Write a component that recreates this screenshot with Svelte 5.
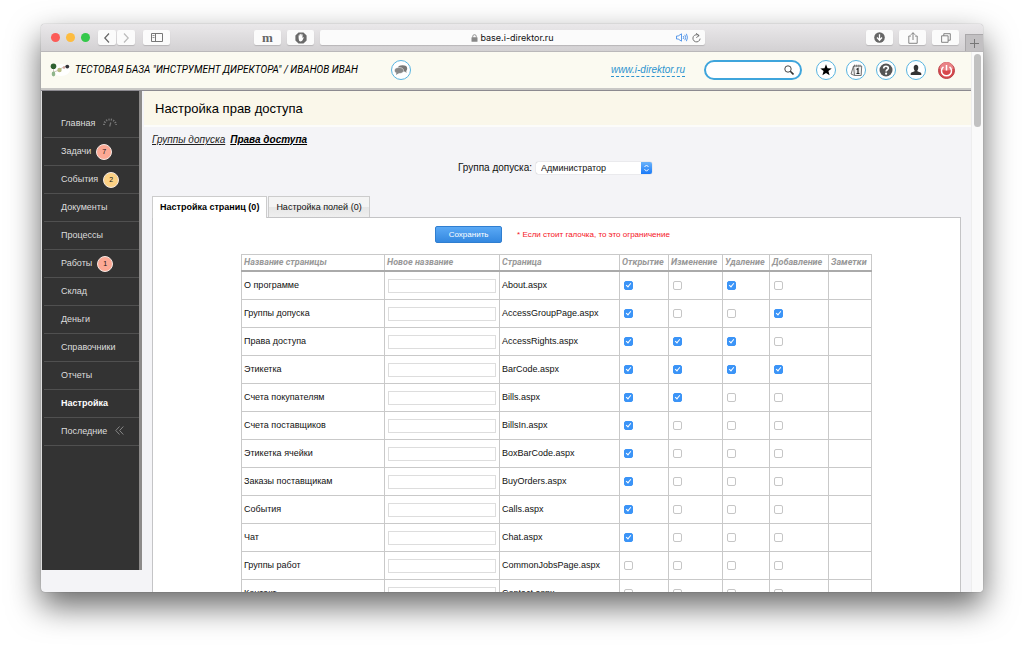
<script>
  const menu = [
    { title: 'Главная', icon: 'gauge' },
    { title: 'Задачи', count: 7, tone: 'red' },
    { title: 'События', count: 2, tone: 'yellow' },
    { title: 'Документы' },
    { title: 'Процессы' },
    { title: 'Работы', count: 1, tone: 'red' },
    { title: 'Склад' },
    { title: 'Деньги' },
    { title: 'Справочники' },
    { title: 'Отчеты' },
    { title: 'Настройка', active: true },
    { title: 'Последние', icon: 'chevrons' }
  ];

  const rights = ['Открытие', 'Изменение', 'Удаление', 'Добавление'];

  // flags: open, edit, delete, add
  let rows = $state([
    { name: 'О программе', page: 'About.aspx', flags: [true, false, true, false] },
    { name: 'Группы допуска', page: 'AccessGroupPage.aspx', flags: [true, false, false, true] },
    { name: 'Права доступа', page: 'AccessRights.aspx', flags: [true, true, true, false] },
    { name: 'Этикетка', page: 'BarCode.aspx', flags: [true, true, true, true] },
    { name: 'Счета покупателям', page: 'Bills.aspx', flags: [true, true, false, false] },
    { name: 'Счета поставщиков', page: 'BillsIn.aspx', flags: [true, false, false, false] },
    { name: 'Этикетка ячейки', page: 'BoxBarCode.aspx', flags: [true, false, false, false] },
    { name: 'Заказы поставщикам', page: 'BuyOrders.aspx', flags: [true, false, false, false] },
    { name: 'События', page: 'Calls.aspx', flags: [true, false, false, false] },
    { name: 'Чат', page: 'Chat.aspx', flags: [true, false, false, false] },
    { name: 'Группы работ', page: 'CommonJobsPage.aspx', flags: [false, false, false, false] },
    { name: 'Контакт', page: 'Contact.aspx', flags: [false, false, false, false] }
  ]);

  let tab = $state(0);
</script>

<div class="desktop">
  <div class="window">
    <div class="toolbar">
      <div class="tools-left">
        <div class="lights"><i class="close"></i><i class="min"></i><i class="max"></i></div>
        <div class="pair">
          <button class="tool narrow" aria-label="Назад">
            <svg width="8" height="12" viewBox="0 0 8 12"><path d="M6 1.5 1.8 6 6 10.5" fill="none" stroke="#666" stroke-width="1.2" /></svg>
          </button>
          <button class="tool narrow" aria-label="Вперед">
            <svg width="8" height="12" viewBox="0 0 8 12"><path d="M2 1.5 6.2 6 2 10.5" fill="none" stroke="#bbb" stroke-width="1.2" /></svg>
          </button>
        </div>
        <button class="tool" aria-label="Боковая панель">
          <svg width="12" height="9" viewBox="0 0 12 9" fill="none" stroke="#777"><path d="M.5.5h11v8H.5zM4.5.5v8" /><path d="M1.5 2.5h2M1.5 4.5h2" stroke-width=".8" /></svg>
        </button>
      </div>
      <div class="tools-center">
        <button class="tool serif">m</button>
        <button class="tool" aria-label="Блокировка">
          <svg width="12" height="12" viewBox="0 0 12 12"><path d="M3.5.4h5l3.1 3.1v5l-3.1 3.1h-5L.4 8.5v-5z" fill="#6a6a6a" /><path d="M3.6 6V3.5c0-.5.7-.5.8 0l.1 1 .1-2c0-.6.8-.6.8 0v1.5l.2-2c.1-.5.8-.5.8 0v2l.4-1.4c.2-.5.9-.3.8.2L7.4 6l.7-.7c.4-.3.9 0 .6.5L7.4 8.6C6.9 9.6 4.6 9.7 4 8.5z" fill="#fff" /></svg>
        </button>
        <div class="address">
          <span></span>
          <span class="host">
            <svg width="7" height="8" viewBox="0 0 7 8"><rect y="3.3" x=".5" width="6" height="4.5" rx=".5" fill="#888" /><path d="M1.7 3.5V2.5a1.8 1.8 0 0 1 3.6 0v1" fill="none" stroke="#888" stroke-width=".9" /></svg>
            base.i-direktor.ru
          </span>
          <span class="address-icons">
            <svg width="12" height="9" viewBox="0 0 12 9" fill="none" stroke="#4a90e8" stroke-width=".9"><path d="M.5 3h1.7L5.5.8v7.4L2.2 6H.5z" /><path d="M7.2 3q1 1.5 0 3M8.8 1.8q1.8 2.7 0 5.4M10.4.8q2.2 3.7 0 7.4" /></svg>
            <svg width="9" height="10" viewBox="0 0 9 10"><path d="M7 2.7A3.6 3.6 0 1 0 8.1 5.6M4 .3l3.2 2.3L4.3 4.6" fill="none" stroke="#666" stroke-width=".9" /></svg>
          </span>
        </div>
      </div>
      <div class="tools-right">
        <button class="tool" aria-label="Загрузки">
          <svg width="11" height="11" viewBox="0 0 11 11"><circle cx="5.5" cy="5.5" r="5.3" fill="#666" /><path d="M5.5 2.3v5.5M3 5.5l2.5 2.7L8 5.5" fill="none" stroke="#fff" stroke-width="1.3" /></svg>
        </button>
        <button class="tool" aria-label="Поделиться">
          <svg width="10" height="12" viewBox="0 0 10 12" fill="none" stroke="#777" stroke-width=".9"><path d="M3 4H.8v7.3h8.4V4H7M5 8V.8M2.9 2.8 5 .7l2.1 2.1" /></svg>
        </button>
        <button class="tool" aria-label="Вкладки">
          <svg width="10" height="10" viewBox="0 0 10 10" fill="none" stroke="#777" stroke-width=".9"><path d="M.6 2.8h6.5v6.5H.6z" /><path d="M2.8 2.8V.7h6.5v6.5H7.1" /></svg>
        </button>
      </div>
      <button class="new-tab" aria-label="Новая вкладка">
        <svg width="9" height="9" viewBox="0 0 9 9"><path d="M4.5 0v9M0 4.5h9" stroke="#777" /></svg>
      </button>
    </div>

    <div class="viewport">
      <div class="page">
        <header>
          <div class="brand">
            <svg width="20" height="14" viewBox="0 0 20 14">
              <ellipse cx="11" cy="7" rx="9" ry="6" fill="#fff" />
              <path d="M3.5 4v7M4 9l5-2M10 6l6-3" stroke="#cdc7bb" />
              <circle cx="3.5" cy="3.2" r="2.8" fill="#2f6130" />
              <ellipse cx="3.5" cy="11" rx="1.8" ry="2.4" fill="#8fb58b" />
              <circle cx="9.5" cy="7" r="2.2" fill="#b9bd83" />
              <circle cx="14" cy="4.5" r="1.3" fill="#d0a39c" />
              <circle cx="17.3" cy="3.6" r="1.9" fill="#2f3138" />
            </svg>
            <span>ТЕСТОВАЯ БАЗА "ИНСТРУМЕНТ ДИРЕКТОРА" / ИВАНОВ ИВАН</span>
          </div>
          <button class="round" aria-label="Чат">
            <svg width="14" height="12" viewBox="0 0 14 12"><ellipse cx="8.5" cy="4.5" rx="4.7" ry="3.3" fill="#777" /><path d="m10.5 7 2 2-.4-3z" fill="#777" /><ellipse cx="5" cy="6.5" rx="4.5" ry="3" fill="#888" stroke="#fff" stroke-width=".5" /><path d="M2.5 8.5 2 11l3-2z" fill="#888" /></svg>
          </button>
          <a class="site" href="#site">www.i-direktor.ru</a>
          <label class="search">
            <input type="text" aria-label="Поиск" />
            <svg width="10" height="10" viewBox="0 0 10 10" fill="none" stroke="#333"><circle cx="4" cy="4" r="3.2" stroke-width=".9" /><path d="M6.3 6.3 9.5 9.5" stroke-width="1.6" /></svg>
          </label>
          <div class="actions">
            <button class="round" aria-label="Избранное">
              <svg width="12" height="12" viewBox="0 0 12 12"><path d="m6 .3 1.5 3.9 4.2.2-3.3 2.6 1.2 4.2L6 8.9l-3.6 2.3L3.6 7 .3 4.4l4.2-.2z" /></svg>
            </button>
            <button class="round" aria-label="Календарь">
              <svg width="13" height="13" viewBox="0 0 13 13" fill="none" stroke="#666" stroke-width=".9"><path d="M3.5 2h8.2l-.5 9.5H4.5zM3.5 2 1 10l3.5 1.5" fill="#eee" /><path d="M4.5.7v2M6.3.7v2M8.2.7v2M10 .7v2" /><path d="M6.500 5.500 8 4.500v5M6.500 9.500h3" stroke="#222" stroke-width="1.2" /></svg>
            </button>
            <button class="round" aria-label="Помощь">
              <svg width="14" height="14" viewBox="0 0 14 14"><circle cx="7" cy="7" r="6.5" fill="#555" /><path d="M4.7 5.4C4.7 2.5 9.4 2.6 9.3 5.2 9.2 6.8 7.1 6.7 7.1 8.5" fill="none" stroke="#fff" stroke-width="1.7" /><circle cx="7.1" cy="10.7" r="1.1" fill="#fff" /></svg>
            </button>
            <button class="round" aria-label="Профиль">
              <svg width="12" height="12" viewBox="0 0 12 12"><path d="M3.7 3.5C3.7-.3 8.3-.3 8.3 3.5 8.3 5.5 7.5 6 7.3 7c.2 1 3.7.8 4 2.6V11H.7V9.6C1 7.8 4.5 8 4.7 7 4.5 6 3.7 5.5 3.7 3.5z" fill="#333" /></svg>
            </button>
            <button class="power" aria-label="Выход">
              <svg width="17" height="17" viewBox="0 0 17 17"><circle cx="8.5" cy="8.5" r="8" fill="#d8474c" stroke="#b9444a" /><path d="M1.5 7a7 7 0 0 1 14 0q-7 3-14 0z" fill="#e98285" /><path d="M5.5 4.8a5 5 0 1 0 6 0M8.5 3v5.5" fill="none" stroke="#fff" stroke-width="1.5" /></svg>
            </button>
          </div>
        </header>

        <div class="body">
          <nav>
            {#each menu as item}
              <a href="#menu" class:active={item.active}>
                {item.title}
                {#if item.count}
                  <span class="badge {item.tone}">{item.count}</span>
                {:else if item.icon === 'gauge'}
                  <svg width="14" height="10" viewBox="0 0 14 10" fill="none" stroke="#777"><path d="M1 7a6 5.500 0 0 1 12 0" stroke-width="2" stroke-dasharray="1.2 1.2" /><path d="M6.7 8.5 7.8 4.5" stroke-width="1.2" /></svg>
                {:else if item.icon === 'chevrons'}
                  <svg width="9" height="9" viewBox="0 0 9 9" fill="none" stroke="#888"><path d="M4.5.5.8 4.5l3.7 4M8.3.5 4.6 4.5l3.7 4" /></svg>
                {/if}
              </a>
            {/each}
          </nav>

          <main>
            <h1>Настройка прав доступа</h1>
            <div class="links">
              <a href="#groups">Группы допуска</a>
              <a href="#rights" class="current">Права доступа</a>
            </div>
            <div class="group">
              <label for="group">Группа допуска:</label>
              <span class="select">
                <select id="group"><option>Администратор</option></select>
                <svg width="11" height="12" viewBox="0 0 11 12"><path d="M3.5 5 5.5 3l2 2M3.5 7.2l2 2 2-2" fill="none" stroke="#fff" /></svg>
              </span>
            </div>

            <div class="tabs">
              <button class:on={tab === 0} onclick={() => (tab = 0)}>Настройка страниц (0)</button>
              <button class:on={tab === 1} onclick={() => (tab = 1)}>Настройка полей (0)</button>
            </div>
            <section>
              <div class="save-row">
                <button class="save">Сохранить</button>
                <span>* Если стоит галочка, то это ограничение</span>
              </div>
              <table>
                <colgroup>
                  <col class="name" />
                  <col class="rename" />
                  <col class="file" />
                  <col class="open" />
                  <col class="edit" />
                  <col class="delete" />
                  <col class="add" />
                  <col class="notes" />
                </colgroup>
                <thead>
                  <tr>
                    <th>Название страницы</th>
                    <th>Новое название</th>
                    <th>Страница</th>
                    {#each rights as right}
                      <th>{right}</th>
                    {/each}
                    <th>Заметки</th>
                  </tr>
                </thead>
                <tbody>
                  {#each rows as row}
                    <tr>
                      <td>{row.name}</td>
                      <td><input type="text" aria-label="Новое название: {row.name}" /></td>
                      <td>{row.page}</td>
                      {#each rights as right, i}
                        <td><input type="checkbox" aria-label="{right}: {row.name}" bind:checked={row.flags[i]} /></td>
                      {/each}
                      <td></td>
                    </tr>
                  {/each}
                </tbody>
              </table>
            </section>
          </main>
        </div>
      </div>
      <div class="scrollbar"><div class="thumb"></div></div>
    </div>
  </div>
</div>

<style>
  :global(body) {
    background: #fff;
  }
  .desktop {
    box-sizing: border-box;
    height: 100vh;
    padding: 24px 41px 59px;
    overflow: hidden;
    font-family: "Liberation Sans", Arial, sans-serif;
    font-size: 9px;
    color: #111;
  }
  .window {
    display: flex;
    flex-direction: column;
    height: 100%;
    overflow: hidden;
    border-radius: 4px;
    background: #f4f4f7;
    box-shadow: 0 0 1px rgba(0, 0, 0, 0.5), 0 14px 32px rgba(0, 0, 0, 0.6);
  }
  button {
    font-family: inherit;
    cursor: pointer;
  }
  svg {
    flex: none;
  }

  /* browser toolbar */
  .toolbar {
    position: relative;
    flex: none;
    display: grid;
    grid-template-columns: 213px 1fr 278px;
    align-items: center;
    height: 27px;
    background: linear-gradient(#eae8ea, #d3d1d3);
    border-bottom: 1px solid #bab8ba;
  }
  .tools-left, .tools-center, .tools-right, .lights, .pair {
    display: flex;
    align-items: center;
  }
  .tools-left {
    gap: 8px;
    padding-left: 10px;
  }
  .tools-center {
    gap: 6px;
  }
  .tools-right {
    gap: 6px;
    justify-content: flex-end;
    padding-right: 24px;
  }
  .lights {
    gap: 6px;
  }
  .lights i {
    width: 9px;
    height: 9px;
    border-radius: 50%;
  }
  .close { background: #fc5b57; }
  .min { background: #fdbc40; }
  .max { background: #34c84a; }
  .pair {
    gap: 1px;
  }
  .tool {
    display: flex;
    align-items: center;
    justify-content: center;
    flex: none;
    width: 27px;
    height: 15px;
    padding: 0;
    border: 0;
    border-radius: 2px;
    background: #fbfbfb;
    box-shadow: 0 1px 1px rgba(0, 0, 0, 0.15);
  }
  .narrow {
    width: 18px;
  }
  .serif {
    font: bold 13px/13px "Liberation Serif", serif;
    color: #666;
  }
  .address {
    flex: 1;
    display: grid;
    grid-template-columns: 1fr auto 1fr;
    align-items: center;
    height: 15px;
    padding: 0 4px;
    border-radius: 2px;
    background: #fbfbfb;
    box-shadow: 0 1px 1px rgba(0, 0, 0, 0.15);
  }
  .host {
    display: flex;
    align-items: center;
    gap: 2px;
    font: 9px/12px Inter, sans-serif;
    color: #111;
  }
  .address-icons {
    display: flex;
    align-items: center;
    justify-content: flex-end;
    gap: 4px;
  }
  .new-tab {
    position: absolute;
    right: 0;
    bottom: 0;
    display: flex;
    align-items: center;
    justify-content: center;
    width: 18px;
    height: 17px;
    padding: 0;
    border: 1px solid #aaa8aa;
    border-width: 1px 0 0 1px;
    background: #c2c0c2;
  }

  /* site */
  .viewport {
    flex: 1;
    display: flex;
    min-height: 0;
  }
  .page {
    flex: 1;
    min-width: 0;
    display: flex;
    flex-direction: column;
  }
  .scrollbar {
    flex: none;
    width: 7px;
    padding: 2px 2px 0;
    background: #fafafa;
    border-left: 1px solid #eee;
  }
  .thumb {
    height: 73px;
    border-radius: 4px;
    background: #c1c1c1;
  }
  header {
    flex: none;
    display: flex;
    align-items: center;
    height: 36px;
    padding: 0 15px 0 9px;
    background: #fbfaf1;
    border-bottom: 2px solid #c9c8c6;
  }
  .brand {
    display: flex;
    align-items: center;
    gap: 5px;
    min-width: 341px;
    font: italic 10px/14px Roboto, "Liberation Sans", sans-serif;
    color: #000;
    white-space: nowrap;
  }
  .round {
    display: flex;
    align-items: center;
    justify-content: center;
    width: 20px;
    height: 20px;
    padding: 0;
    border: 1px solid #58b4e0;
    border-radius: 50%;
    background: #fff;
  }
  .site {
    margin-left: auto;
    font: italic 10px/12px "Liberation Sans", sans-serif;
    color: #2b93cf;
    text-decoration: none;
    border-bottom: 1px dashed #2b93cf;
  }
  .search {
    box-sizing: border-box;
    display: flex;
    align-items: center;
    width: 98px;
    height: 20px;
    margin: 0 14px 0 19px;
    padding: 0 6px 0 8px;
    border: 2px solid #3fa5dc;
    border-radius: 10px;
    background: #fff;
  }
  .search input {
    flex: 1;
    min-width: 0;
    padding: 0;
    border: 0;
    outline: none;
    background: none;
    font: inherit;
  }
  .actions {
    display: flex;
    align-items: center;
    gap: 10px;
  }
  .power {
    display: flex;
    padding: 0 1px 0 2px;
    border: 0;
    background: none;
  }

  .body {
    flex: 1;
    display: flex;
    min-height: 0;
    border-top: 1px solid #8c8a90;
  }
  nav {
    flex: none;
    box-sizing: border-box;
    width: 101px;
    margin-bottom: 22px;
    padding: 19px 0 0 2px;
    background: #333;
    border-left: 1px solid #ddd;
    border-right: 3px solid #8d8b8a;
  }
  nav a {
    box-sizing: border-box;
    display: flex;
    align-items: center;
    gap: 5px;
    height: 28px;
    padding: 0 0 2px 17px;
    border-bottom: 1px solid #505050;
    color: #ddd;
    text-decoration: none;
  }
  nav svg {
    margin-left: 3px;
  }
  nav a.active {
    color: #fff;
    font-weight: bold;
  }
  .badge {
    box-sizing: border-box;
    width: 16px;
    height: 16px;
    margin-top: 2px;
    border: 1px solid #f5e9e4;
    border-radius: 50%;
    font-size: 7px;
    line-height: 14px;
    text-align: center;
    color: #111;
  }
  .red { background: #fca995; }
  .yellow { background: #fdd285; }

  main {
    flex: 1;
    min-width: 0;
    display: flex;
    flex-direction: column;
    padding-left: 2px;
    background: #f4f4f7;
  }
  h1 {
    flex: none;
    margin: 0;
    padding: 2px 0 0 11px;
    background: #faf7ea;
    border-bottom: 2px solid #fcfcfa;
    font-size: 13px;
    font-weight: normal;
    line-height: 32px;
    color: #000;
  }
  .links {
    display: flex;
    gap: 5px;
    padding: 7px 8px 0;
    font-size: 10px;
    line-height: 12px;
    font-style: italic;
  }
  .links a {
    color: #222;
  }
  .links .current {
    font-weight: bold;
    color: #000;
  }
  .group {
    display: flex;
    align-items: center;
    justify-content: center;
    gap: 4px;
    margin: 16px 5px 22px 0;
    font-size: 10px;
    line-height: 12px;
    color: #111;
  }
  .select {
    position: relative;
    display: flex;
  }
  .select select {
    appearance: none;
    width: 116px;
    height: 12px;
    padding: 0 14px 0 5px;
    border: 0;
    border-radius: 2px;
    background: #fff;
    box-shadow: 0 0 1px rgba(0, 0, 0, 0.4);
    font: 9px/12px "Liberation Sans", sans-serif;
    color: #111;
  }
  .select svg {
    position: absolute;
    top: 0;
    right: 0;
    border-radius: 0 2px 2px 0;
    background: linear-gradient(#6bb3fa, #1a7af8);
    pointer-events: none;
  }
  .tabs {
    flex: none;
    display: flex;
    align-items: flex-end;
    gap: 1px;
    margin: 0 8px;
  }
  .tabs button {
    height: 21px;
    padding: 0 7px;
    border: 1px solid #ccc;
    border-bottom: 0;
    background: linear-gradient(#f4f4f4 50%, #e6e6e6 50%, #efefef);
    font-size: 9px;
    color: #111;
  }
  .tabs button.on {
    z-index: 1;
    height: 22px;
    margin-bottom: -1px;
    padding-bottom: 2px;
    background: #fff;
    font-weight: bold;
    color: #000;
  }
  section {
    flex: 1;
    min-height: 0;
    overflow: hidden;
    margin: 0 10px 0 8px;
    border: 1px solid #c4c4c6;
    border-bottom: 0;
    background: #fff;
  }
  .save-row {
    display: flex;
    align-items: center;
    justify-content: center;
    gap: 15px;
    padding: 8px 8px 11px 0;
    font-size: 8px;
    color: #f5141e;
  }
  .save {
    width: 67px;
    height: 17px;
    padding: 0;
    border: 1px solid #2f7ed0;
    border-radius: 2px;
    background: linear-gradient(#5aa9f5, #3488e0);
    font-size: 8px;
    color: #fff;
  }
  table {
    width: 631px;
    margin: 0 auto;
    table-layout: fixed;
    border-collapse: collapse;
    line-height: 11px;
  }
  th, td {
    padding: 0 2px;
    border: 1px solid #c9c9c9;
    text-align: left;
  }
  th {
    height: 15px;
    border-bottom: 2px solid #aaa;
    font-family: Roboto, "Liberation Sans", sans-serif;
    font-style: italic;
    color: #999;
    white-space: nowrap;
  }
  .name { width: 143px; }
  .rename { width: 115px; }
  .file { width: 120px; }
  .open { width: 49px; }
  .edit { width: 54px; }
  .delete { width: 47px; }
  .add { width: 59px; }
  .notes { width: 43px; }
  td {
    height: 27px;
  }
  td input {
    display: block;
    box-sizing: border-box;
    margin: 0 1px;
  }
  td input[type="text"] {
    width: 108px;
    height: 14px;
    padding: 0 2px;
    border: 1px solid #ddd;
    font: inherit;
  }
  td input[type="checkbox"] {
    appearance: none;
    display: flex;
    justify-content: center;
    width: 9px;
    height: 9px;
    margin-left: 2px;
    border: 1px solid #c6c6c6;
    border-radius: 2px;
    background: #fff;
  }
  td input[type="checkbox"]:checked {
    border-color: #3b94f7;
    background: #3b94f7;
  }
  td input[type="checkbox"]:checked::after {
    content: "";
    width: 2px;
    height: 4px;
    border: solid #fff;
    border-width: 0 1px 1px 0;
    transform: rotate(40deg);
  }
</style>
